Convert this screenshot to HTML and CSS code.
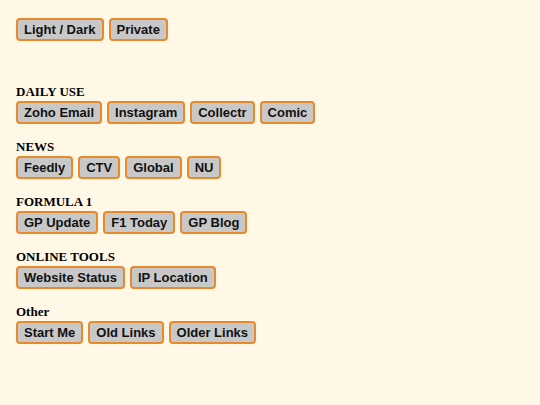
FILE: index.html
```html
<!DOCTYPE html>
<html>
<head>
<meta charset="utf-8">
<link rel="stylesheet" href="styles.css">
</head>
<body>
<div class="page">
  <div class="row top">
    <a class="btn">Light / Dark</a>
    <a class="btn">Private</a>
  </div>
  <div class="sections">
    <section class="group">
      <h2 class="title">DAILY USE</h2>
      <div class="row">
        <a class="btn">Zoho Email</a>
        <a class="btn">Instagram</a>
        <a class="btn">Collectr</a>
        <a class="btn">Comic</a>
      </div>
    </section>
    <section class="group">
      <h2 class="title">NEWS</h2>
      <div class="row">
        <a class="btn">Feedly</a>
        <a class="btn">CTV</a>
        <a class="btn">Global</a>
        <a class="btn">NU</a>
      </div>
    </section>
    <section class="group">
      <h2 class="title">FORMULA 1</h2>
      <div class="row">
        <a class="btn">GP Update</a>
        <a class="btn">F1 Today</a>
        <a class="btn">GP Blog</a>
      </div>
    </section>
    <section class="group">
      <h2 class="title">ONLINE TOOLS</h2>
      <div class="row">
        <a class="btn">Website Status</a>
        <a class="btn">IP Location</a>
      </div>
    </section>
    <section class="group">
      <h2 class="title">Other</h2>
      <div class="row">
        <a class="btn">Start Me</a>
        <a class="btn">Old Links</a>
        <a class="btn">Older Links</a>
      </div>
    </section>
  </div>
</div>
</body>
</html>
```
FILE: styles.css
```css
html, body {
  margin: 0;
  padding: 0;
  background: #fff8e7;
}
.page {
  padding: 18px 16px;
  display: flex;
  flex-direction: column;
}
.row {
  display: flex;
  gap: 5px;
}
.btn {
  display: block;
  font-family: "Liberation Sans", Arial, sans-serif;
  font-weight: bold;
  font-size: 13px;
  line-height: 15px;
  color: #111;
  background: #c8c8c8;
  border: 2px solid #e8892c;
  border-radius: 4px;
  padding: 2px 6px;
}
.sections {
  margin-top: 43px;
  display: flex;
  flex-direction: column;
  gap: 15px;
}
.group {
  display: flex;
  flex-direction: column;
  gap: 2px;
}
.title {
  margin: 0;
  font-family: "Liberation Serif", "Times New Roman", serif;
  font-weight: bold;
  font-size: 13px;
  line-height: 15px;
  color: #000;
}
```
